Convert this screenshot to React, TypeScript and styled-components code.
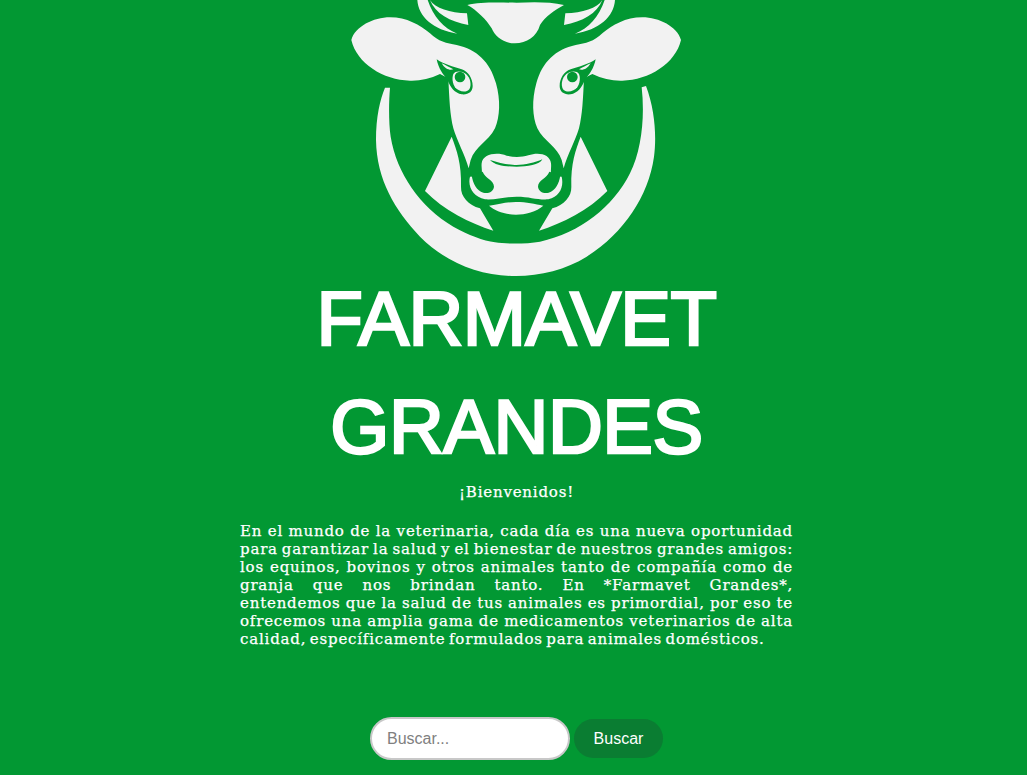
import React from "react";
import styled, { createGlobalStyle } from "styled-components";

const GlobalStyle = createGlobalStyle`
    html, body {
        margin: 0;
        padding: 0;
        background: #029833;
        overflow: hidden;
    }
`;

const Page = styled.main`
    box-sizing: border-box;
    width: 1033px;
    height: 775px;
    display: flex;
    flex-direction: column;
    align-items: center;
    background: #029833;
    color: #fff;
`;

const LogoImage = styled.svg`
    display: block;
    width: 350px;
    height: 285px;
    margin: 0 3px -20px 0;
`;

const Title = styled.h1`
    margin: 0;
    font-family: "Liberation Sans", Arial, sans-serif;
    font-size: 76px;
    font-weight: 400;
    line-height: 108px;
    letter-spacing: -0.5px;
    text-align: center;
    -webkit-text-stroke: 2.6px #fff;
`;

const Intro = styled.section`
    width: 553px;
    font-family: "DejaVu Serif", serif;
    font-size: 15px;
    line-height: 18px;
    letter-spacing: 0.8px;
    word-spacing: -2px;
    -webkit-text-stroke: 0.25px #fff;
`;

const Greeting = styled.p`
    margin: 2px 0 21px;
    text-align: center;
`;

const Body = styled.p`
    margin: 0;
    text-align: justify;
`;

const StretchedLine = styled.span`
    display: block;
    text-align-last: justify;
`;

const SearchForm = styled.form`
    display: flex;
    align-items: center;
    gap: 4px;
    margin-top: 69px;
`;

const SearchInput = styled.input`
    box-sizing: border-box;
    width: 200px;
    height: 43px;
    padding: 0 15px;
    border: 2px solid #c8c8c8;
    border-radius: 22px;
    background: #fff;
    font-family: "Liberation Sans", Arial, sans-serif;
    font-size: 16px;
    outline: none;

    &::placeholder {
        color: #808080;
    }
`;

const SearchButton = styled.button`
    width: 89px;
    height: 39px;
    border: 0;
    border-radius: 20px;
    background: #0a7d32;
    color: #fff;
    font-family: "Liberation Sans", Arial, sans-serif;
    font-size: 16px;
`;

const Logo = () => (
    <LogoImage viewBox="0 0 1050 855" aria-label="Farmavet Grandes">
        <g fill="#f2f2f2">
            <path d="M135 263 L150 263 C146 310 146 370 152 410 C170 520 240 620 340 680 C385 705 430 722 465 727 C500 732 560 732 600 725 C720 700 820 620 870 520 C905 450 915 350 905 262 L918 258 C945 330 950 410 942 470 C925 590 850 700 740 770 C680 808 600 828 528 828 C420 828 320 790 240 710 C165 630 110 540 108 420 C108 350 120 300 135 263 Z" />
            <path d="M382 15 C420 5 480 8 530 8 C580 6 630 5 672 15 C645 30 615 50 600 75 C590 110 560 130 525 130 C490 130 465 110 455 85 C440 60 410 30 382 15 Z" />
            <path d="M447 617 C480 612 500 606 528 606 C560 606 585 612 610 617 C590 635 555 644 528 644 C495 644 465 632 447 617 Z" />
            <path d="M425 490 C428 462 470 455 500 467 C520 472 545 472 565 466 C595 455 630 462 633 490 C636 515 620 530 665 530 C672 560 660 590 625 598 C590 600 570 590 530 590 C490 590 470 600 435 598 C400 590 382 560 390 530 C440 530 422 515 425 490 Z" />
        </g>
        <g fill="#029833">
            <path d="M450 480 C480 490 510 495 530 495 C555 495 585 488 607 478 C600 495 560 500 530 500 C500 500 465 497 450 480 Z" />
            <path d="M395 525 L428 515 C435 535 462 540 462 560 C460 575 445 582 430 578 C410 572 398 550 395 525 Z" />
            <path d="M661 525 L628 515 C621 535 594 540 594 560 C596 575 611 582 626 578 C646 572 658 550 661 525 Z" />
        </g>
        {[false, true].map((mirrored) => (
            <g key={String(mirrored)} transform={mirrored ? "translate(1057 0) scale(-1 1)" : undefined}>
                <path fill="#f2f2f2" d="M232 0 C235 50 280 90 352 101 C310 85 280 50 263 0 Z" />
                <path fill="#f2f2f2" d="M270 0 C285 25 330 38 381 40 L385 75 C330 65 285 40 270 0 Z" />
                <path fill="#f2f2f2" d="M34 120 C45 80 100 52 150 52 C200 52 240 75 270 100 C295 125 320 130 350 135 C410 148 450 185 468 250 C482 300 480 350 465 385 C445 425 405 440 392 480 L386 505 C375 465 350 420 340 385 C330 345 328 300 325 235 L300 222 C270 236 240 243 210 242 C130 240 50 190 34 120 Z" />
                <path fill="#f2f2f2" d="M335 410 C350 450 365 490 363 560 C362 590 385 615 420 625 L460 692 C390 670 310 630 255 573 Z" />
                <path fill="#029833" d="M290 178 C310 192 340 200 365 208 C385 215 398 235 398 258 C398 275 385 285 365 283 C345 280 330 262 322 238 C310 225 295 205 290 178 Z" />
                <path fill="#f2f2f2" d="M340 222 C345 212 365 212 378 222 C392 235 395 255 388 268 C378 280 355 275 345 262 C338 250 335 235 340 222 Z" />
                <path fill="#f2f2f2" d="M305 190 C315 195 330 202 340 208 C330 212 315 208 305 190 Z" />
                <circle fill="#029833" cx="360" cy="231" r="16" />
            </g>
        ))}
    </LogoImage>
);

export default function App() {
    return (
        <Page>
            <GlobalStyle />
            <Logo />
            <Title>
                FARMAVET
                <br />
                GRANDES
            </Title>
            <Intro>
                <Greeting>¡Bienvenidos!</Greeting>
                <Body>
                    <StretchedLine>
                        En el mundo de la veterinaria, cada día es una nueva oportunidad para garantizar la
                        salud y el bienestar de nuestros grandes amigos: los equinos, bovinos y otros animales
                        tanto de compañía como de granja que nos brindan tanto. En *Farmavet Grandes*,
                    </StretchedLine>
                    entendemos que la salud de tus animales es primordial, por eso te ofrecemos una amplia
                    gama de medicamentos veterinarios de alta calidad, específicamente formulados para
                    animales domésticos.
                </Body>
            </Intro>
            <SearchForm>
                <SearchInput placeholder="Buscar..." />
                <SearchButton type="button">Buscar</SearchButton>
            </SearchForm>
        </Page>
    );
}
